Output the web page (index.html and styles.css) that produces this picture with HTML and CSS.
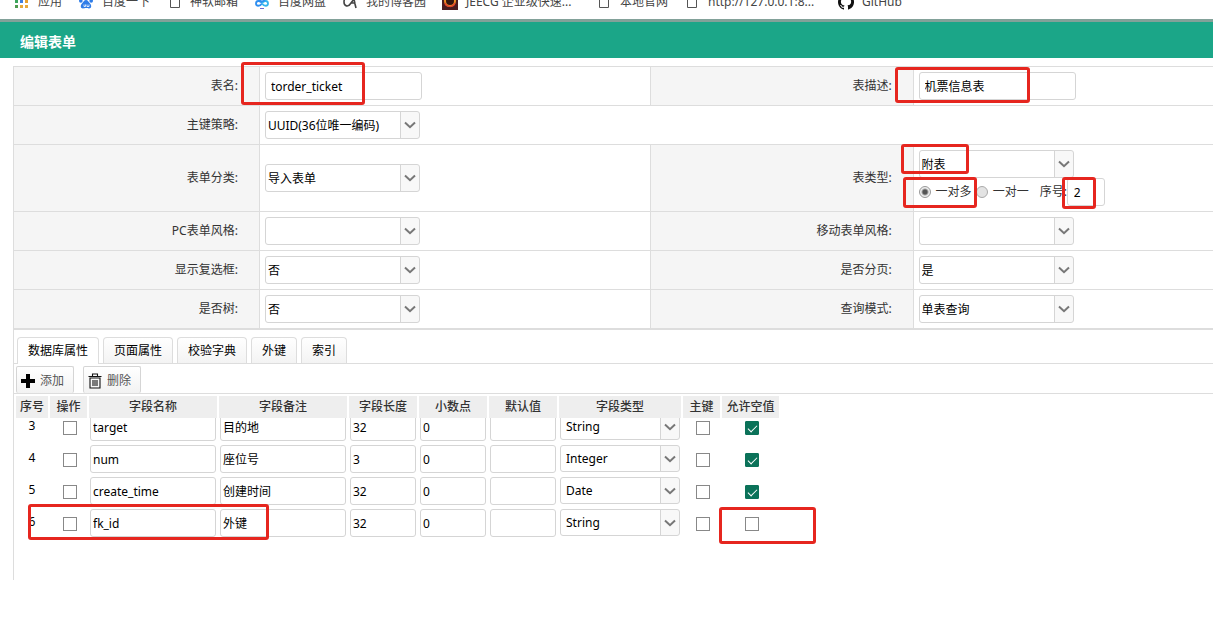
FILE: index.html
```html
<!DOCTYPE html>
<html lang="zh-CN">
<head>
<meta charset="utf-8">
<title>编辑表单</title>
<link rel="stylesheet" href="styles.css">
</head>
<body>
<svg class="defs" aria-hidden="true">
  <symbol id="chevron" viewBox="0 0 12 8"><path d="M1 1.500 6 6.200 11 1.500" fill="none" stroke="#777" stroke-width="2"/></symbol>
  <symbol id="page" viewBox="0 0 12 14"><path d="M1.500 1h9v11.500h-9z" fill="none" stroke="#555" stroke-width="1"/></symbol>
</svg>

<nav class="bookmarks" aria-label="书签">
  <a href="#" class="bm bm-apps"><svg width="14" height="14" viewBox="0 0 14 14"><g fill="#e04a3f"><path d="M0 0h3v3H0zM5 0h3v3H5zM10 0h3v3h-3z"/></g><path d="M0 5h3v3H0z" fill="#3ba55c"/><path d="M5 5h3v3H5z" fill="#3f7fe0"/><path d="M10 5h3v3h-3z" fill="#e8a02c"/><path d="M0 10h3v3H0z" fill="#4f9a4f"/><path d="M5 10h3v3H5zM10 10h3v3h-3z" fill="#e8a93a"/></svg>应用</a>
  <a href="#" class="bm bm-baidu"><svg width="14" height="14" viewBox="0 0 14 14" fill="#2f7de8"><circle cx="4.500" cy="2.500" r="2"/><circle cx="9.500" cy="2.500" r="2"/><circle cx="1.800" cy="6" r="1.800"/><circle cx="12.200" cy="6" r="1.800"/><path d="M7 5c2 0 2.500 2 4 3.500 2 2 1.500 5-1 5-1.300 0-2-.4-3-.4s-1.700.4-3 .4c-2.500 0-3-3-1-5C4.500 7 5 5 7 5z"/><path d="M5 9.500v2h1.500v-2M8 9.500v2h2v-2" fill="none" stroke="#fff" stroke-width=".8"/></svg>百度一下</a>
  <a href="#" class="bm bm-mail"><svg width="12" height="14"><use href="#page"/></svg>神软邮箱</a>
  <a href="#" class="bm bm-pan"><svg width="14" height="14" viewBox="0 0 14 14" fill="none" stroke-width="1.800"><path d="M7 8C5 5 1 5.500 1 8.500S5 11.500 7 8.500" stroke="#2f8ff0"/><path d="M7 8c2-3 6-2.500 6 .5S9 11.500 7 8.500" stroke="#35b5ee"/><circle cx="7" cy="3.500" r="2.800" stroke="#2f8ff0"/><path d="M5 13.500h4" stroke="#6d6ad0" stroke-width="1"/></svg>百度网盘</a>
  <a href="#" class="bm bm-blog"><svg width="15" height="14" viewBox="0 0 15 14" fill="none" stroke="#444" stroke-width="1.600"><path d="M8 2C4 0 1 3 1 7s4 6 7 1l3-4 1 5 1 4M8 8h4"/></svg>我的博客园</a>
  <a href="#" class="bm bm-jeecg"><svg width="16" height="15" viewBox="0 0 16 15"><path d="M0 0h16v15H0z" fill="#4a1b20"/><circle cx="8" cy="6" r="5" fill="#351510" stroke="#ef8b24" stroke-width="2"/><path d="M3 8c1 4 8 5 10 0" fill="none" stroke="#e4452d" stroke-width="1.500"/></svg>JEECG 企业级快速...</a>
  <a href="#" class="bm bm-site"><svg width="12" height="14"><use href="#page"/></svg>本地官网</a>
  <a href="#" class="bm bm-local"><svg width="12" height="14"><use href="#page"/></svg>http://127.0.0.1:8...</a>
  <a href="#" class="bm bm-github"><svg width="16" height="16" viewBox="0 0 16 16"><path fill="#111" d="M8 0C3.580 0 0 3.580 0 8c0 3.540 2.290 6.530 5.470 7.590.4.070.55-.17.55-.38 0-.19-.01-.82-.01-1.490-2.010.37-2.530-.49-2.690-.94-.09-.23-.48-.94-.82-1.130-.28-.15-.68-.52-.01-.53.63-.01 1.080.58 1.230.82.72 1.210 1.870.87 2.330.66.070-.52.28-.87.51-1.070-1.780-.2-3.640-.89-3.640-3.950 0-.87.31-1.590.82-2.150-.08-.2-.36-1.020.08-2.120 0 0 .67-.21 2.200.82a7.500 7.500 0 0 1 4 0c1.530-1.040 2.200-.82 2.200-.82.44 1.100.16 1.920.08 2.120.51.56.82 1.270.82 2.150 0 3.070-1.870 3.750-3.650 3.950.29.25.54.73.54 1.480 0 1.070-.01 1.930-.01 2.200 0 .21.15.46.55.38A8 8 0 0 0 8 0z"/></svg>GitHub</a>
</nav>

<header class="titlebar"><h1>编辑表单</h1></header>

<main class="panel">
  <table class="form">
    <colgroup><col class="c-label"><col class="c-field"><col class="c-label2"><col class="c-field2"></colgroup>
    <tr>
      <th><label for="name">表名:</label></th>
      <td><input class="text wide" id="name" value="torder_ticket"><span class="mark mark-name"></span></td>
      <th><label for="desc">表描述:</label></th>
      <td><input class="text wide" id="desc" value="机票信息表"><span class="mark mark-desc"></span></td>
    </tr>
    <tr>
      <th><label for="pk">主键策略:</label></th>
      <td colspan="3"><span class="select"><select id="pk"><option>UUID(36位唯一编码)</option></select><svg><use href="#chevron"/></svg></span></td>
    </tr>
    <tr>
      <th><label for="cat">表单分类:</label></th>
      <td><span class="select"><select id="cat"><option>导入表单</option></select><svg><use href="#chevron"/></svg></span></td>
      <th><label for="type">表类型:</label></th>
      <td>
        <span class="select"><select id="type"><option>附表</option></select><svg><use href="#chevron"/></svg></span>
        <div class="relation">
          <label class="opt"><input type="radio" name="rel" checked>一对多</label>
          <label class="opt"><input type="radio" name="rel">一对一</label>
          <label class="order" for="order">序号:</label><input class="text tiny" id="order" value="2">
        </div>
        <span class="mark mark-type"></span><span class="mark mark-rel"></span><span class="mark mark-order"></span>
      </td>
    </tr>
    <tr>
      <th><label for="pc">PC表单风格:</label></th>
      <td><span class="select"><select id="pc"><option></option></select><svg><use href="#chevron"/></svg></span></td>
      <th><label for="mobile">移动表单风格:</label></th>
      <td><span class="select"><select id="mobile"><option></option></select><svg><use href="#chevron"/></svg></span></td>
    </tr>
    <tr>
      <th><label for="box">显示复选框:</label></th>
      <td><span class="select"><select id="box"><option>否</option></select><svg><use href="#chevron"/></svg></span></td>
      <th><label for="paging">是否分页:</label></th>
      <td><span class="select"><select id="paging"><option>是</option></select><svg><use href="#chevron"/></svg></span></td>
    </tr>
    <tr>
      <th><label for="tree">是否树:</label></th>
      <td><span class="select"><select id="tree"><option>否</option></select><svg><use href="#chevron"/></svg></span></td>
      <th><label for="query">查询模式:</label></th>
      <td><span class="select"><select id="query"><option>单表查询</option></select><svg><use href="#chevron"/></svg></span></td>
    </tr>
  </table>

  <section class="details">
    <div class="tabs" role="tablist">
      <button class="tab active" role="tab" aria-selected="true">数据库属性</button>
      <button class="tab" role="tab">页面属性</button>
      <button class="tab" role="tab">校验字典</button>
      <button class="tab" role="tab">外键</button>
      <button class="tab" role="tab">索引</button>
    </div>
    <div class="toolbar">
      <button class="tool"><svg width="14" height="14" viewBox="0 0 14 14"><path d="M5 0h4v5h5v4H9v5H5V9H0V5h5z"/></svg>添加</button>
      <button class="tool"><svg width="14" height="16" viewBox="0 0 14 16" fill="none" stroke="#111" stroke-width="1.200"><path d="M.5 3.500h13M4.500 3.500V1h5v2.500M2 5v10h10V5zM5 7v6M7 7v6M9 7v6" stroke-width="1.100"/></svg>删除</button>
    </div>
    <table class="grid grid-head">
      <colgroup><col class="g34"><col class="g39"><col class="g130"><col class="g130"><col class="g70"><col class="g70"><col class="g70"><col class="g124"><col class="g39"><col class="g59"></colgroup>
      <tr><th>序号</th><th>操作</th><th>字段名称</th><th>字段备注</th><th>字段长度</th><th>小数点</th><th>默认值</th><th>字段类型</th><th>主键</th><th>允许空值</th></tr>
    </table>
    <div class="grid-body">
      <table class="grid">
        <colgroup><col class="g34"><col class="g39"><col class="g130"><col class="g130"><col class="g70"><col class="g70"><col class="g70"><col class="g124"><col class="g39"><col class="g59"></colgroup>
        <tr>
          <td class="num">3</td><td><input type="checkbox" aria-label="选择"></td>
          <td><input class="text" aria-label="字段名称" value="target"></td><td><input class="text" aria-label="字段备注" value="目的地"></td>
          <td><input class="text" aria-label="字段长度" value="32"></td><td><input class="text" aria-label="小数点" value="0"></td><td><input class="text" aria-label="默认值"></td>
          <td><span class="select"><select aria-label="字段类型"><option>String</option></select><svg><use href="#chevron"/></svg></span></td>
          <td><input type="checkbox" aria-label="主键"></td><td><input type="checkbox" aria-label="允许空值" checked></td>
        </tr>
        <tr>
          <td class="num">4</td><td><input type="checkbox" aria-label="选择"></td>
          <td><input class="text" aria-label="字段名称" value="num"></td><td><input class="text" aria-label="字段备注" value="座位号"></td>
          <td><input class="text" aria-label="字段长度" value="3"></td><td><input class="text" aria-label="小数点" value="0"></td><td><input class="text" aria-label="默认值"></td>
          <td><span class="select"><select aria-label="字段类型"><option>Integer</option></select><svg><use href="#chevron"/></svg></span></td>
          <td><input type="checkbox" aria-label="主键"></td><td><input type="checkbox" aria-label="允许空值" checked></td>
        </tr>
        <tr>
          <td class="num">5</td><td><input type="checkbox" aria-label="选择"></td>
          <td><input class="text" aria-label="字段名称" value="create_time"></td><td><input class="text" aria-label="字段备注" value="创建时间"></td>
          <td><input class="text" aria-label="字段长度" value="32"></td><td><input class="text" aria-label="小数点" value="0"></td><td><input class="text" aria-label="默认值"></td>
          <td><span class="select"><select aria-label="字段类型"><option>Date</option></select><svg><use href="#chevron"/></svg></span></td>
          <td><input type="checkbox" aria-label="主键"></td><td><input type="checkbox" aria-label="允许空值" checked></td>
        </tr>
        <tr>
          <td class="num">6<span class="mark mark-row"></span></td><td><input type="checkbox" aria-label="选择"></td>
          <td><input class="text" aria-label="字段名称" value="fk_id"></td><td><input class="text" aria-label="字段备注" value="外键"></td>
          <td><input class="text" aria-label="字段长度" value="32"></td><td><input class="text" aria-label="小数点" value="0"></td><td><input class="text" aria-label="默认值"></td>
          <td><span class="select"><select aria-label="字段类型"><option>String</option></select><svg><use href="#chevron"/></svg></span></td>
          <td><input type="checkbox" aria-label="主键"></td><td><input type="checkbox" aria-label="允许空值"><span class="mark mark-null"></span></td>
        </tr>
      </table>
    </div>
  </section>
</main>
</body>
</html>
```
FILE: styles.css
```css
* { box-sizing: border-box; }
body {
  margin: 0;
  background: #fff;
  color: #333;
  font: 12px/18px "Noto Sans", "Noto Sans CJK SC", sans-serif;
}
input, select, button { font: inherit; color: #000; margin: 0; }
.defs { position: absolute; width: 0; height: 0; }

/* browser bookmarks, cut off by the top of the window */
.bookmarks {
  display: flex;
  align-items: flex-end;
  height: 19px;
  padding: 0 15px 8px;
  overflow: hidden;
}
.bm {
  display: flex;
  align-items: center;
  flex: none;
  gap: 9px;
  color: #444;
  text-decoration: none;
  white-space: nowrap;
}
.bm svg { flex: none; }
.bm-apps { width: 64px; }
.bm-baidu { width: 90px; }
.bm-mail { width: 86px; }
.bm-pan { width: 88px; }
.bm-blog { width: 99px; gap: 8px; }
.bm-jeecg { width: 156px; gap: 8px; }
.bm-site { width: 88px; gap: 10px; }
.bm-local { width: 152px; gap: 10px; }
.bm-github { gap: 8px; }

.titlebar {
  border-top: 3px solid #82a199;
  background: #1ba688;
  padding: 10px 20px 6px;
}
.titlebar h1 {
  margin: 0;
  color: #fff;
  font-size: 14px;
  line-height: 20px;
  font-weight: 700;
}

.panel { margin: 8px 0 0 13px; }

.form {
  width: 100%;
  table-layout: fixed;
  border-collapse: collapse;
  border-bottom: 2px solid #ddd;
}
.c-label { width: 20.5%; }
.c-field { width: 32.6%; }
.c-label2 { width: 21.9%; }
.c-field2 { width: 25%; }
.form th, .form td {
  border: 1px solid #ddd;
  border-right: 0;
  padding: 5px;
  height: 39px;
}
.form th {
  padding-right: 21px;
  background: #f5f5f5;
  text-align: right;
  font-weight: 400;
}
.form td { position: relative; }

.text {
  display: block;
  width: 100%;
  height: 28px;
  padding: 0 2px;
  border: 1px solid #d5d5d5;
  border-radius: 3px;
  background: #fff;
}
.text.wide { width: 157px; padding: 0 5px; }
.text.tiny { width: 38px; padding: 0 6px; }

.select {
  display: grid;
  width: 155px;
  height: 28px;
  border: 1px solid #d5d5d5;
  border-radius: 3px;
  background: linear-gradient(to left, #f8f8f8 18px, #d5d5d5 18px, #d5d5d5 19px, #fff 19px);
}
.select select {
  grid-area: 1 / 1;
  width: 100%;
  padding: 1px 20px 0 2px;
  border: 0;
  background: none;
  appearance: none;
}
.select svg {
  grid-area: 1 / 1;
  place-self: center end;
  width: 12px;
  height: 8px;
  margin-right: 3px;
  pointer-events: none;
}

.relation { display: flex; align-items: center; }
.opt { display: flex; align-items: center; gap: 5px; margin-right: 4px; }
.order { margin-left: 7px; }
input[type="radio"] {
  width: 12px;
  height: 12px;
  border: 1px solid #aaa;
  border-radius: 50%;
  background: #e3e3e3;
  appearance: none;
}
input[type="radio"]:checked {
  border-color: #999;
  background: radial-gradient(circle, #555 2px, #eee 4px);
}

.details { border-left: 1px solid #ddd; }
.tabs {
  display: flex;
  gap: 4px;
  padding: 7px 3px 0;
  border-bottom: 1px solid #ddd;
}
.tab {
  height: 26px;
  padding: 0 10px;
  border: 1px solid #ddd;
  border-bottom: 0;
  border-radius: 4px 4px 0 0;
  background: linear-gradient(#fff, #f3f3f3);
}
.tab.active { height: 27px; margin-bottom: -1px; background: #fff; }

.toolbar {
  display: flex;
  gap: 9px;
  padding: 2px 2px 0;
  border-bottom: 1px solid #ddd;
}
.tool {
  display: flex;
  align-items: center;
  gap: 5px;
  width: 58px;
  height: 27px;
  padding: 1px 4px 0;
  border: 1px solid #d5d5d5;
  border-bottom: 0;
  border-radius: 2px;
  background: linear-gradient(#fff, #f2f2f2);
  color: #555;
  white-space: nowrap;
}
.tool svg { flex: none; }

.grid {
  width: 765px;
  margin-left: 1px;
  table-layout: fixed;
  border-collapse: separate;
  border-spacing: 0;
}
.g34 { width: 34px; }
.g39 { width: 39px; }
.g59 { width: 59px; }
.g70 { width: 70px; }
.g124 { width: 124px; }
.g130 { width: 130px; }
.grid th {
  height: 24px;
  padding: 0;
  border: solid #fff;
  border-width: 2px 1px 0;
  background: #eee;
  font-weight: 500;
  white-space: nowrap;
}
.grid td { position: relative; height: 32px; padding: 2px; text-align: center; }
.grid .num { padding-bottom: 4px; color: #000; }
.grid .select { width: 100%; height: 27px; margin-bottom: 1px; text-align: left; }
.grid .select select { padding-left: 5px; }
.grid-body {
  display: flex;
  align-items: flex-end;
  height: 162px;
  padding-bottom: 41px;
  overflow: hidden;
}
input[type="checkbox"] {
  display: block;
  width: 14px;
  height: 14px;
  margin: 2px auto 0;
  border: 1px solid #888;
  background: #fff;
  appearance: none;
}
.grid td:has(input[type="checkbox"]) { padding-left: 4px; }
input[type="checkbox"]:checked {
  border-color: #0b7259;
  border-radius: 1px;
  background: #0b7259;
}
input[type="checkbox"]:checked::before {
  content: "";
  display: block;
  width: 8px;
  height: 4px;
  margin: 3px 2px;
  border: solid #fff;
  border-width: 0 0 1px 1px;
  transform: rotate(-45deg);
}

/* red highlight frames drawn over the form */
.mark {
  position: absolute;
  z-index: 1;
  border: 3px solid #e6261f;
  border-radius: 3px;
  pointer-events: none;
}
.mark-name { left: -19px; top: -5px; width: 124px; height: 43px; }
.mark-desc { left: -19px; top: 0; width: 135px; height: 36px; }
.mark-type { left: -13px; top: -1px; width: 68px; height: 30px; }
.mark-rel { left: -11px; top: 32px; width: 74px; height: 31px; }
.mark-order { left: 148px; top: 32px; width: 34px; height: 32px; }
.mark-row { left: 13px; top: -3px; width: 241px; height: 36px; }
.mark-null { left: -2px; top: 0; width: 97px; height: 37px; }
```
